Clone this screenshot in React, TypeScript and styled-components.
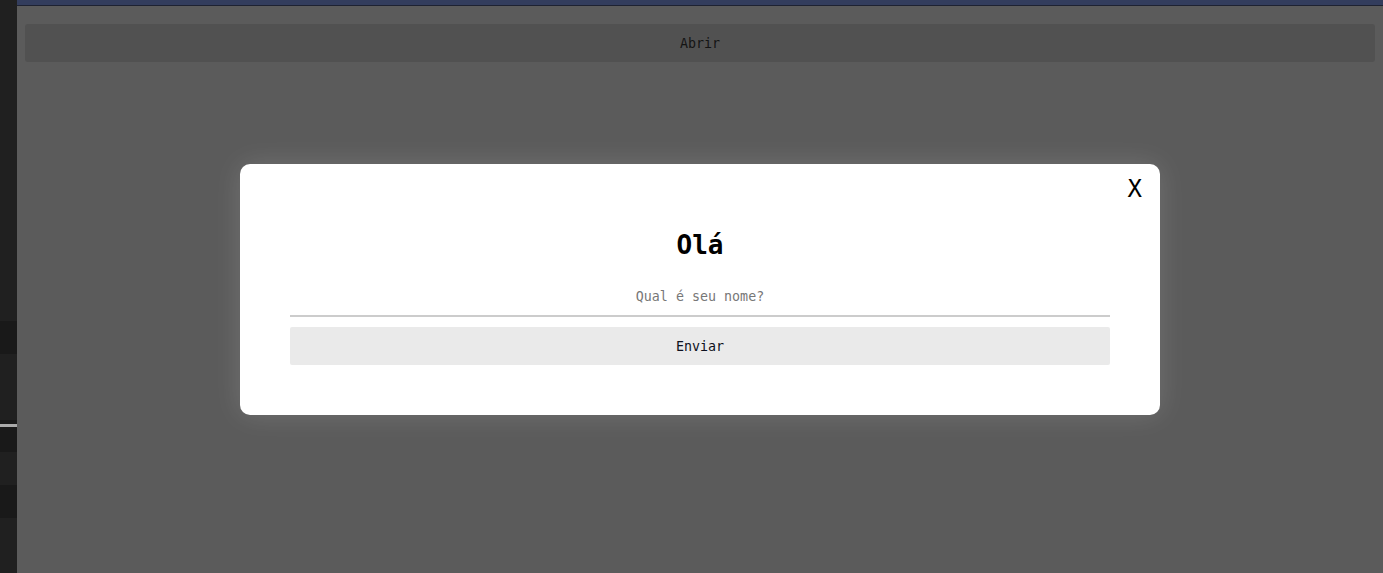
import React from "react";
import styled, { createGlobalStyle } from "styled-components";

const Global = createGlobalStyle`
  html, body { margin: 0; padding: 0; height: 100%; background: #5b5b5b; }
  #root { height: 100%; }
  * { box-sizing: border-box; }
`;

const mono = `"DejaVu Sans Mono", "Liberation Mono", monospace`;

const Shell = styled.div`
  display: flex;
  width: 1383px;
  height: 573px;
  overflow: hidden;
`;

const Sidebar = styled.div`
  width: 17px;
  flex: none;
  display: flex;
  flex-direction: column;
  background: #202020;
`;

const Band = styled.div<{ $h: number; $c: string }>`
  height: ${(p) => p.$h}px;
  flex: none;
  background: ${(p) => p.$c};
`;

const Main = styled.div`
  flex: 1;
  display: flex;
  flex-direction: column;
  min-width: 0;
`;

const TopBar = styled.div`
  height: 6px;
  flex: none;
  background: #333d5d;
  border-bottom: 1px solid #1e2232;
`;

const Content = styled.div`
  position: relative;
  flex: 1;
  background: #5b5b5b;
  padding: 18px 8px 0;
  font-family: ${mono};
`;

const OpenButton = styled.button`
  display: block;
  width: 100%;
  height: 38px;
  border: none;
  border-radius: 3px;
  background: #515151;
  color: #141414;
  font-family: ${mono};
  font-size: 13.333px;
  cursor: pointer;
`;

const Overlay = styled.div`
  position: absolute;
  inset: 0;
  display: flex;
  align-items: center;
  justify-content: center;
`;

const Modal = styled.div`
  position: relative;
  width: 920px;
  height: 251px;
  background: #ffffff;
  border-radius: 10px;
  box-shadow: 0 0 28px rgba(255, 255, 255, 0.14);
  padding: 66px 50px 50px;
  display: flex;
  flex-direction: column;
`;

const Close = styled.button`
  position: absolute;
  top: 11px;
  right: 18px;
  border: none;
  background: none;
  padding: 0;
  font-family: ${mono};
  font-size: 24px;
  line-height: 28px;
  color: #000;
  cursor: pointer;
`;

const Title = styled.h1`
  margin: 0;
  height: 30px;
  font-family: ${mono};
  font-size: 26px;
  line-height: 30px;
  font-weight: bold;
  text-align: center;
  color: #000;
`;

const NameInput = styled.input`
  margin-top: 26px;
  height: 31px;
  width: 100%;
  padding: 0 0 8px;
  border: none;
  border-bottom: 2px solid #cccccc;
  outline: none;
  text-align: center;
  font-family: ${mono};
  font-size: 13.333px;
  color: #000;
  background: transparent;
  &::placeholder { color: #777; }
`;

const SendButton = styled.button`
  margin-top: 10px;
  height: 38px;
  width: 100%;
  border: none;
  border-radius: 2px;
  background: #eaeaea;
  color: #0d1020;
  font-family: ${mono};
  font-size: 13.333px;
  cursor: pointer;
`;

const bands: [number, string][] = [
  [321, "#202020"],
  [33, "#191919"],
  [66, "#202020"],
  [4, "#191919"],
  [3, "#a9a9a9"],
  [25, "#191919"],
  [33, "#202020"],
  [33, "#191919"],
  [55, "#202020"],
];

export default function App() {
  return (
    <>
      <Global />
      <Shell>
        <Sidebar>
          {bands.map(([h, c], i) => (
            <Band key={i} $h={h} $c={c} />
          ))}
        </Sidebar>
        <Main>
          <TopBar />
          <Content>
            <OpenButton>Abrir</OpenButton>
            <Overlay>
              <Modal>
                <Close>X</Close>
                <Title>Olá</Title>
                <NameInput placeholder="Qual é seu nome?" />
                <SendButton>Enviar</SendButton>
              </Modal>
            </Overlay>
          </Content>
        </Main>
      </Shell>
    </>
  );
}
